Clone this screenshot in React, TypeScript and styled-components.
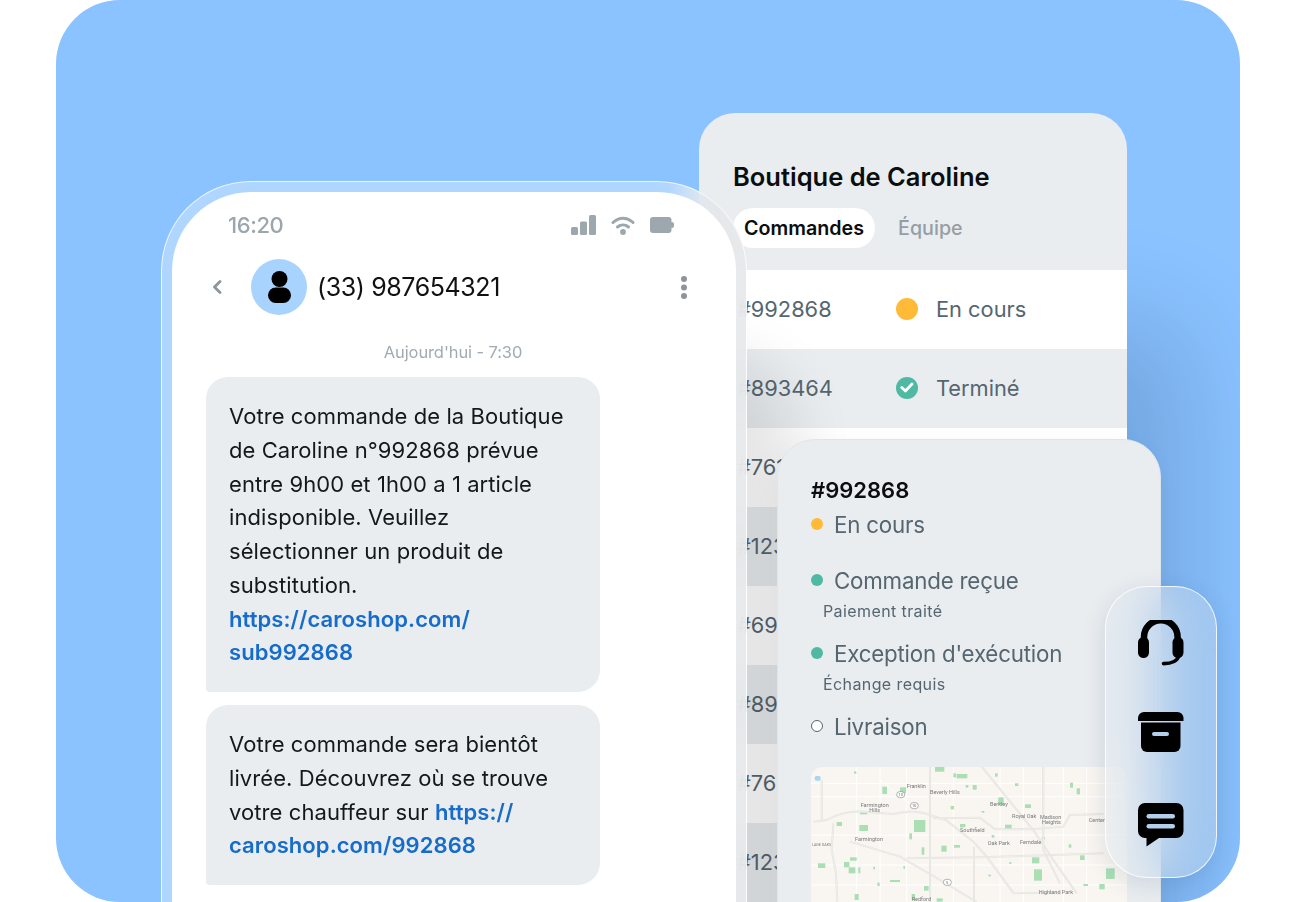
import React from "react";
import styled, { createGlobalStyle } from "styled-components";

const FONT = `"Inter", "Noto Sans", "Liberation Sans", sans-serif`;

const GlobalStyle = createGlobalStyle`
  html, body {
    margin: 0;
    padding: 0;
    background: #fff;
    overflow: hidden;
  }
  * {
    box-sizing: border-box;
  }
  body {
    font-family: ${FONT};
  }
`;

const Page = styled.div`
  width: 1296px;
  height: 902px;
  padding: 0 56px;
  overflow: hidden;
`;

// tracks follow the edges of the overlapping cards, so the cards can share cells
const Hero = styled.div`
  height: 902px;
  padding-left: 105px;
  background: #8ac3ff;
  border-radius: 64px;
  overflow: hidden;
  display: grid;
  grid-template-columns: 538px 48px 30px 328px 22px 34px 56px;
  grid-template-rows: 113px 68px 258px 147px 292px 24px;
`;

const PhoneFrame = styled.div`
  grid-column: 1 / 3;
  grid-row: 3 / -1;
  z-index: 2;
  height: 900px;
  padding: 10px;
  border: 1.5px solid rgba(255, 255, 255, 0.75);
  border-radius: 90px 90px 0 0;
  background: linear-gradient(
    90deg,
    rgba(255, 255, 255, 0.32) 87%,
    rgba(230, 232, 234, 0.92) 94%
  );
  backdrop-filter: blur(22px);
  box-shadow: 50px 170px 60px rgba(0, 0, 0, 0.1);
`;

const PhoneScreen = styled.div`
  height: 100%;
  padding-top: 22px;
  background: #fff;
  border-radius: 79px 79px 0 0;
`;

const StatusBar = styled.div`
  height: 22px;
  padding: 0 62px 0 56px;
  display: flex;
  align-items: center;
  justify-content: space-between;
`;

const Clock = styled.span`
  font-size: 22px;
  font-weight: 500;
  letter-spacing: -0.4px;
  color: #9ba6ad;
`;

const StatusIcons = styled.div`
  display: flex;
  align-items: center;
  gap: 15px;
`;

const Header = styled.div`
  height: 56px;
  margin-top: 23px;
  padding: 0 49px 0 40px;
  display: flex;
  align-items: center;
`;

const BackIcon = styled.svg`
  width: 10px;
  height: 14px;
  margin-right: 29px;
  flex: none;
`;

const Avatar = styled.div`
  width: 56px;
  height: 56px;
  border-radius: 50%;
  background: #a9d3ff;
  display: flex;
  align-items: center;
  justify-content: center;
  flex: none;
`;

const PhoneNumber = styled.span`
  margin-left: 10px;
  flex: 1;
  font-size: 25px;
  letter-spacing: -0.4px;
  color: #111;
`;

const DateLine = styled.div`
  margin-top: 26px;
  height: 22px;
  line-height: 22px;
  text-align: center;
  padding-right: 2px;
  font-size: 16.5px;
  letter-spacing: -0.1px;
  color: #a2abb1;
`;

const Thread = styled.div`
  margin-top: 14px;
  padding-left: 34px;
  display: flex;
  flex-direction: column;
  gap: 13px;
`;

const Bubble = styled.div`
  width: 394px;
  padding: 23px 16px 22px 23px;
  background: #e9edf0;
  border-radius: 22px 22px 22px 4px;
  font-size: 22px;
  line-height: 33.75px;
  letter-spacing: 0.08px;
  color: #14181b;
  white-space: nowrap;
`;

const MessageLink = styled.span`
  color: #166ccb;
  font-weight: 600;
`;

const StorePanel = styled.section`
  grid-column: 2 / 6;
  grid-row: 2 / -1;
  z-index: 1;
  padding-top: 48px;
  background: #e9edf0;
  border-radius: 36px 36px 0 0;
  box-shadow: 60px 210px 100px rgba(0, 30, 80, 0.17);
  overflow: hidden;
`;

const StoreTitle = styled.h2`
  margin: 0 0 0 34px;
  font-size: 25.5px;
  line-height: 32px;
  font-weight: 600;
  color: #0b0d0e;
`;

const Tabs = styled.div`
  margin: 15px 0 22px 34px;
  display: flex;
  align-items: center;
`;

const Tab = styled.div<{ $active?: boolean }>`
  height: 40px;
  padding: 0 11px;
  margin-right: 12px;
  display: flex;
  align-items: center;
  border-radius: 20px;
  background: ${({ $active }) => ($active ? "#fff" : "transparent")};
  font-size: 19.7px;
  font-weight: ${({ $active }) => ($active ? 600 : 500)};
  color: ${({ $active }) => ($active ? "#0b0d0e" : "#959ea5")};
`;

const OrderRow = styled.div<{ $shaded: boolean }>`
  height: 79px;
  padding: 0 0 2px 38px;
  display: flex;
  align-items: center;
  background: ${({ $shaded }) => ($shaded ? "#e9edf0" : "#fff")};
  font-size: 21.8px;
  color: #566670;
`;

const OrderId = styled.span`
  width: 159px;
  flex: none;
`;

const StatusBadge = styled.span`
  width: 22px;
  height: 22px;
  margin-right: 18px;
  flex: none;
  border-radius: 50%;
  display: flex;
  align-items: center;
  justify-content: center;
`;

const PendingBadge = styled(StatusBadge)`
  background: #ffbb38;
`;

const DoneBadge = styled(StatusBadge)`
  background: #4fb9a3;
`;

const DetailCard = styled.section`
  grid-column: 4 / 7;
  grid-row: 4 / -1;
  z-index: 3;
  height: 520px;
  padding: 35px 34px 0 33px;
  background: #e9edf0;
  border: 1px solid #dde5ec;
  border-radius: 38px 38px 0 0;
  box-shadow: -6px 10px 30px rgba(0, 0, 0, 0.05);
`;

const DetailId = styled.div`
  height: 30px;
  line-height: 30px;
  font-size: 22px;
  font-weight: 600;
  color: #0b0d0e;
`;

const Timeline = styled.div`
  height: 262px;
  display: flex;
  flex-direction: column;
`;

const Step = styled.div<{ $gap: number }>`
  margin-top: ${({ $gap }) => $gap}px;
  height: 30px;
  display: flex;
  align-items: center;
  font-size: 22.3px;
  letter-spacing: -0.2px;
  color: #566670;
`;

const Dot = styled.span<{ $color?: string }>`
  width: 12px;
  height: 12px;
  margin-right: 11px;
  flex: none;
  border-radius: 50%;
  background: ${({ $color }) => $color || "#fff"};
  border: ${({ $color }) => ($color ? "none" : "1px solid #566670")};
`;

const StepNote = styled.div`
  margin: 5px 0 0 12px;
  height: 22px;
  line-height: 22px;
  font-size: 16px;
  letter-spacing: 0.4px;
  color: #566670;
`;

const MapBox = styled.div`
  width: 316px;
  height: 136px;
  border-radius: 12px 12px 0 0;
  overflow: hidden;
  background: #f9f6f1;
`;

const MapSvg = styled.svg`
  display: block;
  width: 316px;
  height: 136px;
  filter: blur(0.7px);
`;

const Dock = styled.nav`
  grid-column: 5 / 8;
  grid-row: 5 / 6;
  z-index: 4;
  padding-top: 33px;
  border: 1.5px solid rgba(255, 255, 255, 0.85);
  border-radius: 42px;
  background: rgba(225, 230, 235, 0.32);
  backdrop-filter: blur(30px);
  box-shadow: 0 6px 24px rgba(0, 40, 90, 0.12);
  display: flex;
  flex-direction: column;
  align-items: center;
`;

const DockSlot = styled.div<{ $gap: number }>`
  margin-top: ${({ $gap }) => $gap}px;
  display: flex;
`;

const orders = [
  { id: "#992868", status: "pending", label: "En cours" },
  { id: "#893464", status: "done", label: "Terminé" },
  { id: "#761204" },
  { id: "#123587" },
  { id: "#691430" },
  { id: "#893112" },
  { id: "#764209" },
  { id: "#123774" },
];

const greens = [
  [247, 110, 14, 22], [300, 112, 18, 18], [405, 50, 28, 15], [470, 72, 32, 13], [518, 105, 12, 14],
  [497, 105, 8, 8], [342, 210, 34, 36], [178, 225, 26, 18], [110, 216, 16, 12], [180, 187, 22, 6],
  [452, 168, 10, 10], [545, 183, 8, 5], [675, 163, 18, 11], [645, 100, 10, 8], [810, 98, 9, 15],
  [830, 115, 10, 18], [480, 222, 16, 10], [615, 224, 20, 13], [328, 250, 8, 18], [424, 287, 16, 18],
  [462, 285, 18, 8], [365, 292, 8, 22], [575, 255, 8, 8], [725, 262, 10, 6], [806, 283, 8, 10],
  [840, 316, 14, 14], [696, 322, 22, 18], [150, 322, 20, 10], [132, 336, 16, 16], [146, 352, 20, 18],
  [54, 340, 22, 14], [175, 352, 6, 18], [232, 398, 7, 10], [270, 390, 30, 6], [372, 408, 14, 14],
  [702, 358, 24, 34], [850, 402, 14, 6], [898, 402, 16, 16], [164, 432, 12, 18], [335, 432, 10, 18],
  [410, 445, 18, 10], [918, 355, 26, 32], [585, 70, 8, 10], [460, 70, 8, 12], [162, 64, 7, 7],
  [595, 142, 16, 22], [220, 350, 5, 8], [628, 336, 6, 6], [565, 374, 8, 5], [310, 348, 5, 8],
];

const majorRoads = [
  "M40 215 L80 210 Q130 182 190 185 L280 192 Q340 175 390 195 L440 212 L520 275 L560 320 L640 428 L780 430",
  "M100 220 L95 300 L108 370 L112 456",
  "M150 275 L300 320 L420 390 L530 456",
  "M390 50 V456",
  "M400 205 L540 203 L585 238 L700 238 L790 230 L810 195 L910 192",
  "M320 325 L540 322 L760 315 L910 310",
  "M545 50 L700 240 L760 330 L830 430",
  "M522 290 V456",
  "M730 50 V300 L780 400",
  "M65 90 V210",
];

const minorRoads = [
  "M33 140 H980", "M33 255 H980", "M33 345 H980", "M33 405 H980", "M240 50 V456", "M320 50 V456",
  "M460 50 V456", "M600 50 V456", "M670 50 V456", "M790 50 V456", "M860 50 V456", "M170 50 V456",
  "M240 90 L340 170", "M33 100 H980",
];

const mapLabels = [
  { x: 320, y: 115, text: "Franklin" },
  { x: 390, y: 132, text: "Beverly Hills" },
  { x: 182, y: 170, text: "Farmington" },
  { x: 208, y: 187, text: "Hills" },
  { x: 570, y: 167, text: "Berkley" },
  { x: 636, y: 204, text: "Royal Oak" },
  { x: 720, y: 206, text: "Madison" },
  { x: 726, y: 222, text: "Heights" },
  { x: 866, y: 215, text: "Center" },
  { x: 480, y: 247, text: "Southfield" },
  { x: 165, y: 272, text: "Farmington" },
  { x: 563, y: 286, text: "Oak Park" },
  { x: 660, y: 283, text: "Ferndale" },
  { x: 716, y: 432, text: "Highland Park" },
  { x: 335, y: 454, text: "Redford" },
];

const shields = [
  { x: 302, y: 134, text: "10" },
  { x: 343, y: 167, text: "10" },
  { x: 442, y: 397, text: "5" },
];

const DetroitMap = () => (
  <MapBox>
    <MapSvg viewBox="33 51 948 408">
      <rect x="33" y="51" width="948" height="408" fill="#f9f6f1" />
      {minorRoads.map((d) => (
        <path key={d} d={d} stroke="#ffffff" strokeWidth="3" fill="none" />
      ))}
      {greens.map(([x, y, w, h]) => (
        <rect key={`${x}-${y}`} x={x} y={y} width={w} height={h} fill="#aadfb4" />
      ))}
      <rect x="44" y="78" width="18" height="14" rx="5" fill="#a9d6f2" />
      {majorRoads.map((d) => (
        <g key={d}>
          <path d={d} stroke="#e2e2df" strokeWidth="6" fill="none" />
          <path d={d} stroke="#f5f4f1" strokeWidth="2" fill="none" />
        </g>
      ))}
      {mapLabels.map((l) => (
        <text key={l.text + l.x} x={l.x} y={l.y} fontSize="16.500" fill="#77797a" fontFamily="Roboto, sans-serif">
          {l.text}
        </text>
      ))}
      <text x="36" y="289" fontSize="11" fill="#77797a" fontFamily="Roboto, sans-serif">
        LAGE OAKS
      </text>
      {shields.map((s) => (
        <g key={s.x}>
          <rect x={s.x - 12} y={s.y - 9} width="24" height="18" rx="9" fill="#fff" stroke="#6b6b6b" strokeWidth="1.5" />
          <text x={s.x} y={s.y + 4} fontSize="11" fill="#555" textAnchor="middle" fontFamily="Roboto, sans-serif">
            {s.text}
          </text>
        </g>
      ))}
    </MapSvg>
  </MapBox>
);

const HeadsetIcon = () => (
  <svg width="46" height="46" viewBox="0 0 46 46">
    <path d="M6 22v-5a16.800 16.800 0 0 1 33.600 0v5" fill="none" stroke="#000" strokeWidth="6.500" />
    <rect x="0" y="17" width="11" height="21" rx="5.500" fill="#000" />
    <rect x="34.500" y="17" width="11" height="21" rx="5.500" fill="#000" />
    <path d="M41 35c-1 5.500-7 8.600-15.500 8.600" fill="none" stroke="#000" strokeWidth="3.600" strokeLinecap="round" />
  </svg>
);

const ArchiveIcon = () => (
  <svg width="46" height="40" viewBox="0 0 46 40">
    <path d="M0 9V6a6 6 0 0 1 6-6h33.500a6 6 0 0 1 6 6v3z" fill="#000" />
    <path d="M3 10.500h39.500V34a6 6 0 0 1-6 6H9a6 6 0 0 1-6-6z" fill="#000" />
    <rect x="14" y="20" width="17" height="4" rx="2" fill="#b4cfe9" />
  </svg>
);

const ChatIcon = () => (
  <svg width="46" height="44" viewBox="0 0 46 44">
    <path d="M7 0h31.500a7 7 0 0 1 7 7v21a7 7 0 0 1-7 7H21L8.500 43.500V35H7a7 7 0 0 1-7-7V7a7 7 0 0 1 7-7z" fill="#000" />
    <rect x="8.500" y="11" width="28.500" height="4.500" rx="2.250" fill="#b4cfe9" />
    <rect x="8.500" y="21" width="28.500" height="4.500" rx="2.250" fill="#b4cfe9" />
  </svg>
);

const App = () => (
  <Page>
    <GlobalStyle />
    <Hero>
      <PhoneFrame>
        <PhoneScreen>
          <StatusBar>
            <Clock>16:20</Clock>
            <StatusIcons>
              <svg width="25" height="20" viewBox="0 0 25 20" fill="#9ca8ae">
                <rect x="0" y="12" width="7" height="8" rx="1.500" />
                <rect x="9" y="6.500" width="7" height="13.500" rx="1.500" />
                <rect x="18" y="0" width="7" height="20" rx="1.500" />
              </svg>
              <svg width="24" height="19" viewBox="0 0 24 19" fill="none" stroke="#9ca8ae" strokeWidth="3" strokeLinecap="round">
                <path d="M2 6.500C8 .8 16 .8 22 6.500" />
                <path d="M6.500 11c3.200-2.800 7.800-2.800 11 0" />
                <circle cx="12" cy="16" r="2.900" fill="#9ca8ae" stroke="none" />
              </svg>
              <svg width="24" height="16" viewBox="0 0 24 16" fill="#9ca8ae">
                <rect x="0" y="0" width="21.500" height="16" rx="3" />
                <rect x="20" y="5" width="4" height="6" rx="2" />
              </svg>
            </StatusIcons>
          </StatusBar>
          <Header>
            <BackIcon viewBox="0 0 10 14" fill="none" stroke="#8a959c" strokeWidth="2.800" strokeLinecap="round" strokeLinejoin="round">
              <path d="M8 1.500 2.500 7 8 12.500" />
            </BackIcon>
            <Avatar>
              <svg width="23" height="32" viewBox="0 0 23 32" fill="#000">
                <circle cx="11.500" cy="8" r="8" />
                <rect x="0" y="16.500" width="23" height="15.500" rx="7.750" />
              </svg>
            </Avatar>
            <PhoneNumber>(33) 987654321</PhoneNumber>
            <svg width="6" height="23" viewBox="0 0 6 23" fill="#8a959c">
              <circle cx="3" cy="3" r="3" />
              <circle cx="3" cy="11.500" r="3" />
              <circle cx="3" cy="20" r="3" />
            </svg>
          </Header>
          <DateLine>Aujourd'hui - 7:30</DateLine>
          <Thread>
            <Bubble>
              Votre commande de la Boutique
              <br />
              de Caroline n°992868 prévue
              <br />
              entre 9h00 et 1h00 a 1 article
              <br />
              indisponible. Veuillez
              <br />
              sélectionner un produit de
              <br />
              substitution.
              <br />
              <MessageLink>
                https://caroshop.com/
                <br />
                sub992868
              </MessageLink>
            </Bubble>
            <Bubble>
              Votre commande sera bientôt
              <br />
              livrée. Découvrez où se trouve
              <br />
              votre chauffeur sur <MessageLink>https://</MessageLink>
              <br />
              <MessageLink>caroshop.com/992868</MessageLink>
            </Bubble>
          </Thread>
        </PhoneScreen>
      </PhoneFrame>

      <StorePanel>
        <StoreTitle>Boutique de Caroline</StoreTitle>
        <Tabs>
          <Tab $active>Commandes</Tab>
          <Tab>Équipe</Tab>
        </Tabs>
        {orders.map((order, i) => (
          <OrderRow key={order.id} $shaded={i % 2 === 1}>
            <OrderId>{order.id}</OrderId>
            {order.status === "pending" && <PendingBadge />}
            {order.status === "done" && (
              <DoneBadge>
                <svg width="14" height="11" viewBox="0 0 14 11" fill="none" stroke="#fff" strokeWidth="2.800" strokeLinecap="round" strokeLinejoin="round">
                  <path d="M1.800 5.500 5.400 9 12 2" />
                </svg>
              </DoneBadge>
            )}
            {order.label}
          </OrderRow>
        ))}
      </StorePanel>

      <DetailCard>
        <DetailId>#992868</DetailId>
        <Timeline>
          <Step $gap={4}>
            <Dot $color="#ffbb38" />
            En cours
          </Step>
          <Step $gap={26}>
            <Dot $color="#4fb9a3" />
            Commande reçue
          </Step>
          <StepNote>Paiement traité</StepNote>
          <Step $gap={16}>
            <Dot $color="#4fb9a3" />
            Exception d'exécution
          </Step>
          <StepNote>Échange requis</StepNote>
          <Step $gap={16}>
            <Dot />
            Livraison
          </Step>
        </Timeline>
        <DetroitMap />
      </DetailCard>

      <Dock>
        <DockSlot $gap={0}>
          <HeadsetIcon />
        </DockSlot>
        <DockSlot $gap={46}>
          <ArchiveIcon />
        </DockSlot>
        <DockSlot $gap={51}>
          <ChatIcon />
        </DockSlot>
      </Dock>
    </Hero>
  </Page>
);

export default App;
